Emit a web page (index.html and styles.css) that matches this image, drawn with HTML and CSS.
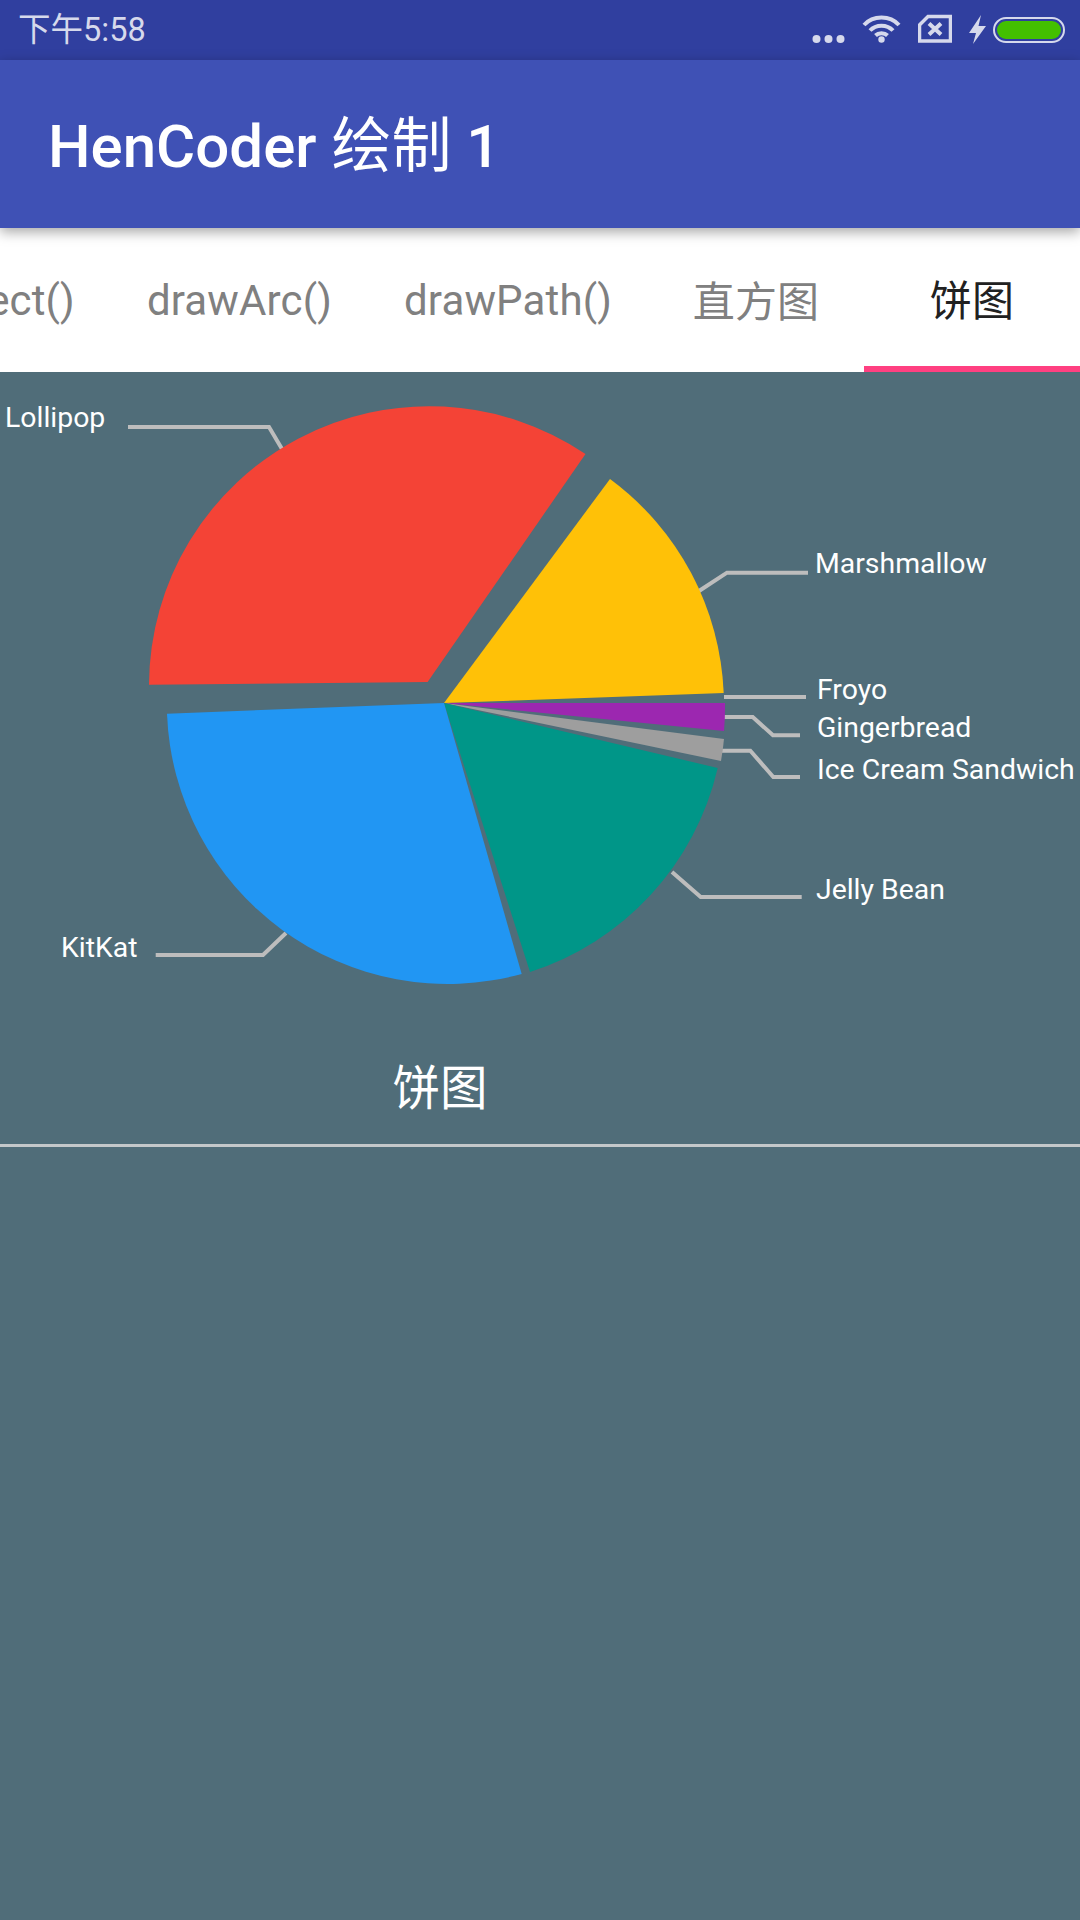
FILE: index.html
```html
<!DOCTYPE html>
<html lang="zh-CN">
<head>
  <meta charset="UTF-8" />
  <title>HenCoder 绘制 1</title>
  <link rel="stylesheet" href="styles.css">
</head>
<body>
  <div class="status-bar">
    <span class="status-time">下午5:58</span>
    <div class="status-icons">
      <svg width="33" height="60" viewBox="0 0 33 60"><g class="icon-fill"><circle cx="4.5" cy="39" r="4"/><circle cx="16.5" cy="39" r="4"/><circle cx="28.5" cy="39" r="4"/></g></svg>
      <svg width="39" height="60" viewBox="0 0 39 60">
        <g class="icon-line">
          <path d="M2 25 C11 15 28 15 37 25"/>
          <path d="M8 30.5 C14 24 25 24 31 30.5"/>
          <path d="M13.5 35.5 C16.5 32.5 22.5 32.5 25.5 35.5"/>
        </g>
        <circle class="icon-fill" cx="19.5" cy="39.5" r="3.2"/>
      </svg>
      <svg width="34" height="60" viewBox="0 0 34 60">
        <path class="icon-line thin" d="M10 16.5 H32.5 V41 H1.5 V25 Z"/>
        <path class="icon-line" d="M11 23.5 L23 34.5 M23 23.5 L11 34.5"/>
      </svg>
      <svg width="17" height="60" viewBox="0 0 17 60"><path class="icon-fill" d="M12 15 L0 33 L7 33 L4 44 L17 26 L9.5 26 Z"/></svg>
      <svg class="battery" width="72" height="60" viewBox="0 0 72 60">
        <rect class="battery-case" x="1" y="18" width="70" height="24" rx="12"/>
        <rect class="battery-level" x="4" y="21" width="64" height="18" rx="9"/>
      </svg>
    </div>
  </div>

  <header class="app-bar">
    <h1>HenCoder <span class="cjk">绘制</span> 1</h1>
  </header>

  <nav class="tabs">
    <div class="tab">drawRect()</div>
    <div class="tab">drawArc()</div>
    <div class="tab">drawPath()</div>
    <div class="tab cjk-tab">直方图</div>
    <div class="tab cjk-tab active">饼图</div>
  </nav>

  <main class="content">
    <svg class="chart" width="1080" height="772" viewBox="0 372 1080 772">
      <!-- leader lines -->
      <g class="leader">
        <polyline points="128,427 269,427 282,449"/>
        <polyline points="699,591 727,572.7 808,572.7"/>
        <polyline points="724,697 806,697"/>
        <polyline points="724,717 752.7,717 773,735.3 800,735.3"/>
        <polyline points="722,750.7 750.3,750.7 773.3,777 800,777"/>
        <polyline points="672,872 700.7,897 801.7,897"/>
        <polyline points="155.7,955 263,955 286,933"/>
      </g>
      <!-- slices -->
      <path fill="#f44336" d="M427.6 682 L149 684.7 A280 280 0 0 1 585.5 454 Z"/>
      <path fill="#ffc107" d="M444 703 L610 479 A280 280 0 0 1 723.7 693 Z"/>
      <path fill="#9c27b0" d="M444 703 L725 703 A281 281 0 0 1 724 731 Z"/>
      <path fill="#9e9e9e" d="M444 703 L724 739 A281 281 0 0 1 721 761 Z"/>
      <path fill="#009688" d="M444 703 L717.7 768 A281 281 0 0 1 530 972 Z"/>
      <path fill="#2196f3" d="M444 703 L521.7 974 A281 281 0 0 1 167 713.7 Z"/>
      <!-- labels -->
      <g class="label">
        <text x="5" y="427">Lollipop</text>
        <text x="815" y="573">Marshmallow</text>
        <text x="817" y="699">Froyo</text>
        <text x="817" y="737">Gingerbread</text>
        <text x="817" y="778.5">Ice Cream Sandwich</text>
        <text x="816" y="898.5">Jelly Bean</text>
        <text x="61" y="957">KitKat</text>
      </g>
      <text class="chart-name" x="440" y="1104.5">饼图</text>
    </svg>
    <div class="divider"></div>
  </main>
</body>
</html>
```

FILE: styles.css
```css
* {
  box-sizing: border-box;
}
html, body {
  height: 100%;
}
body {
  margin: 0;
  display: flex;
  flex-direction: column;
  overflow: hidden;
  font-family: Roboto, "Noto Sans CJK SC", sans-serif;
  background-color: #506d79;
}

/* Status bar */
.status-bar {
  flex: none;
  height: 60px;
  display: flex;
  justify-content: space-between;
  align-items: center;
  padding: 0 15px 0 18px;
  background-color: #303f9f;
}
.status-time {
  font-size: 32.5px;
  line-height: 1;
  padding-top: 1px;
  color: #d6d9ec;
}
.status-icons {
  display: flex;
  gap: 17px;
}
.status-icons svg {
  display: block;
}
.status-icons .battery {
  margin-left: -10px;
}
.icon-fill {
  fill: #d6d9ec;
}
.icon-line {
  fill: none;
  stroke: #d6d9ec;
  stroke-width: 4;
}
.icon-line.thin {
  stroke-width: 3.5;
}
.battery-case {
  fill: #303f9f;
  stroke: #d6d9ec;
  stroke-width: 2;
}
.battery-level {
  fill: #43c000;
}

/* App bar */
.app-bar {
  flex: none;
  height: 168px;
  display: flex;
  align-items: center;
  padding: 0 0 7px 48px;
  background-color: #3f51b5;
  box-shadow: 0 4px 12px rgba(0, 0, 0, 0.35);
  position: relative;
  z-index: 1;
}
.app-bar h1 {
  margin: 0;
  font-size: 60px;
  font-weight: 500;
  color: white;
}
.app-bar .cjk {
  font-weight: 400;
}

/* Tabs */
.tabs {
  flex: none;
  height: 144px;
  display: flex;
  justify-content: flex-end;
  overflow: hidden;
  background-color: white;
}
.tab {
  flex: none;
  min-width: 216px;
  padding: 1px 36px 0;
  display: flex;
  justify-content: center;
  align-items: center;
  font-size: 42px;
  letter-spacing: 0.15px;
  color: #808080;
}
.tab.cjk-tab {
  padding-top: 0;
  padding-bottom: 4px;
}
.tab.active {
  color: #212121;
  border-bottom: 6px solid #ff4081;
  padding-bottom: 0;
}

/* Chart */
.content {
  flex: 1;
}
.chart {
  display: block;
}
.leader polyline {
  fill: none;
  stroke: #bdbdbd;
  stroke-width: 4;
}
.label text {
  font-size: 28.4px;
  fill: white;
}
.chart-name {
  font-size: 47.5px;
  fill: white;
  text-anchor: middle;
}
.divider {
  height: 3px;
  background-color: #c4c8ca;
}
```
